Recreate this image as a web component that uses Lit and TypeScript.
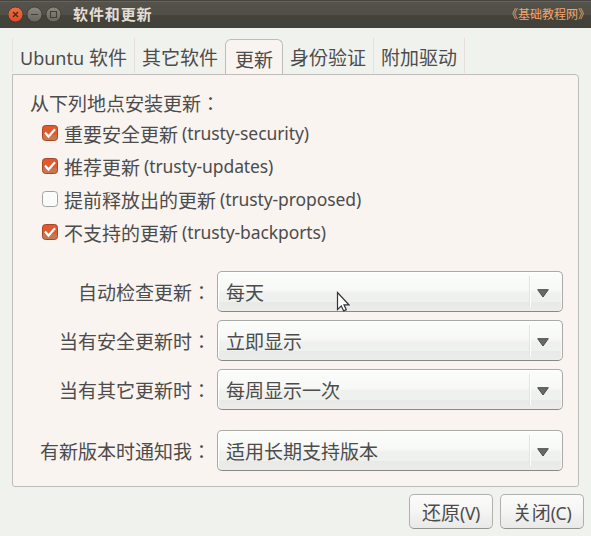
import { LitElement, html, css, svg } from "lit";
import { customElement, property } from "lit/decorators.js";

@customElement("window-bar")
class WindowBar extends LitElement {
  static styles = css`
    :host {
      display: flex;
      align-items: center;
      height: 28px;
      box-sizing: border-box;
      padding: 0 7px 0 8px;
      background: linear-gradient(#45443f 0 1px, #64635b 1px 2px, #54524b 2px, #504f48 15px, #43423b 15px, #42413a 28px);
    }
    .controls { display: block; flex: none; }
    .title {
      margin-left: 10px;
      font-size: 15px;
      font-weight: 700;
      letter-spacing: 0.9px;
      line-height: 28px;
      color: #e2ded6;
    }
    .site {
      margin-left: auto;
      font-size: 12px;
      line-height: 28px;
      color: #f3a66c;
      font-feature-settings: "halt";
    }
  `;
  render() {
    return html`
      <svg class="controls" width="55" height="28" viewBox="0 0 55 28">
        <defs>
          <linearGradient id="o" x1="0" y1="0" x2="0" y2="1">
            <stop offset="0" stop-color="#ee7047" /><stop offset="1" stop-color="#dc4f20" />
          </linearGradient>
          <linearGradient id="g" x1="0" y1="0" x2="0" y2="1">
            <stop offset="0" stop-color="#8b897f" /><stop offset="1" stop-color="#66655e" />
          </linearGradient>
        </defs>
        <circle cx="7.5" cy="14.5" r="7.5" fill="url(#o)" stroke="#38372f" stroke-width=".8" />
        <circle cx="26.5" cy="14.5" r="7.5" fill="url(#g)" stroke="#38372f" stroke-width=".8" />
        <circle cx="45.5" cy="14.5" r="7.5" fill="url(#g)" stroke="#38372f" stroke-width=".8" />
        <path d="M5 12l5 5M10 12l-5 5" stroke="#4a2a1c" stroke-width="1.4" />
        <path d="M23 14.5h7M42.5 11.5h6v6h-6z" fill="none" stroke="#403f39" stroke-width="1.1" />
      </svg>
      <span class="title">软件和更新</span>
      <span class="site">《基础教程网》</span>
    `;
  }
}

@customElement("check-row")
class CheckRow extends LitElement {
  @property() label = "";
  @property() channel = "";
  @property({ type: Boolean }) checked = false;
  static styles = css`
    :host { display: flex; align-items: center; height: 33px; color: #4c4c4c; font-size: 19px; line-height: 33px; white-space: pre; }
    .box { flex: none; display: block; margin: 0 6px 2px 0; }
    .latin { font-family: "Noto Sans", sans-serif; font-size: 17.5px; letter-spacing: -0.1px; margin-left: 4px; }
  `;
  render() {
    return html`
      <svg class="box" width="16" height="16" viewBox="0 0 16 16">
        <defs>
          <linearGradient id="f" x1="0" y1="0" x2="0" y2="1">
            <stop offset="0" stop-color="#e0592b" /><stop offset=".6" stop-color="#dc5c30" />
            <stop offset=".62" stop-color="#c9734c" /><stop offset="1" stop-color="#c77b54" />
          </linearGradient>
        </defs>
        <rect x=".5" y=".5" width="15" height="15" rx="3" fill=${this.checked ? "url(#f)" : "#fafcf9"}
          stroke=${this.checked ? "#a3492a" : "#a3a29f"} />
        ${this.checked ? svg`<path d="M3 7.6l3.5 3.9L13 4.2" fill="none" stroke="#fff" stroke-width="2.2" />` : null}
      </svg>
      <span>${this.label}</span><span class="latin">${this.channel}</span>
    `;
  }
}

@customElement("combo-box")
class ComboBox extends LitElement {
  @property() value = "";
  static styles = css`
    :host {
      display: flex;
      align-items: center;
      box-sizing: border-box;
      height: 41px;
      padding: 0 13px 0 8px;
      border: 1px solid #a9aaa8;
      border-bottom-color: #868a86;
      border-radius: 5px;
      background: linear-gradient(#fbfdfa, #f8f9f6 45%, #f0f1ee 55%, #eff1ee 76%, #e9e9e7 78%, #ececea);
      box-shadow: inset 1px 1px #fff, inset -1px 0 #fafafa;
      color: #4c4c4c;
      font-size: 19px;
      line-height: 39px;
    }
    .value { flex: 1; }
    .rule { width: 1px; height: 31px; background: #e2e3e1; border-right: 1px solid #fff; margin-right: 6px; }
    .arrow { display: block; margin-top: 3px; }
  `;
  render() {
    return html`
      <span class="value">${this.value}</span>
      <span class="rule"></span>
      <svg class="arrow" width="12" height="9" viewBox="0 0 12 9">
        <path d="M.7 .7h10.6L6 8z" fill="#68696b" stroke="#4b4b4b" />
      </svg>
    `;
  }
}

@customElement("app-root")
class AppRoot extends LitElement {
  static styles = css`
    :host {
      display: flex;
      flex-direction: column;
      position: relative;
      width: 591px;
      height: 536px;
      overflow: hidden;
      background: #f0f2ee;
      color: #4c4c4c;
      font-family: "Noto Sans CJK JP", "Noto Sans CJK SC", sans-serif;
      font-size: 19px;
    }
    .tabs { display: flex; align-items: flex-end; height: 46px; padding: 0 12px; z-index: 1; }
    .tab {
      box-sizing: border-box;
      height: 35px;
      margin-bottom: 1px;
      line-height: 37px;
      padding-left: 7px;
      border-right: 1px solid #e7dfdc;
      white-space: pre;
      flex: none;
    }
    .tab .latin { font-family: "Noto Sans", sans-serif; font-size: 18px; margin-right: 5px; }
    .first { width: 123px; border-left: 1px solid #e9e3e0; }
    .second { width: 90px; border-right: 0; }
    .active {
      width: 58px;
      height: 35px;
      margin-bottom: 0;
      padding-left: 9px;
      line-height: 37px;
      background: #faf4f1;
      border: 1px solid #bfbdbb;
      border-bottom: 0;
      border-radius: 6px 6px 0 0;
    }
    .fourth, .fifth { width: 91px; }
    .panel {
      box-sizing: border-box;
      margin: 0 12px;
      height: 413px;
      border: 1px solid #bfbdbb;
      border-radius: 0 4px 3px 3px;
      background: #faf4f1;
      padding: 14px 15px 0 17px;
    }
    .heading { height: 28px; line-height: 28px; }
    .checks { padding-left: 12px; height: 132px; }
    .form { display: grid; grid-template-columns: 187px 346px; row-gap: 8px; margin-top: 22px; }
    .label { text-align: right; padding-right: 6px; line-height: 41px; }
    .gap { margin-top: 12px; }
    .actions { display: flex; justify-content: flex-end; gap: 7px; padding: 7px 7px 0 0; }
    .button {
      box-sizing: border-box;
      width: 84px;
      height: 35px;
      border: 1px solid #b0b1af;
      border-bottom-color: #929592;
      border-radius: 5px;
      background: linear-gradient(#fbfcfa, #f5f6f3 50%, #efefed 70%, #e9e9e7);
      color: #4c4c4c;
      text-align: center;
      line-height: 34px;
      white-space: pre;
    }
    .button .latin { font-family: "Noto Sans", sans-serif; font-size: 17.5px; letter-spacing: -0.3px; }
    .pointer { position: absolute; left: 336px; top: 291px; }
  `;

  render() {
    const settings = [
      ["自动检查更新：", "每天"],
      ["当有安全更新时：", "立即显示"],
      ["当有其它更新时：", "每周显示一次"],
      ["有新版本时通知我：", "适用长期支持版本"],
    ];
    return html`
      <window-bar></window-bar>
      <div class="tabs">
        <div class="tab first"><span class="latin">Ubuntu</span>软件</div>
        <div class="tab second">其它软件</div>
        <div class="tab active">更新</div>
        <div class="tab fourth">身份验证</div>
        <div class="tab fifth">附加驱动</div>
      </div>
      <div class="panel">
        <div class="heading">从下列地点安装更新：</div>
        <div class="checks">
          <check-row checked label="重要安全更新" channel="(trusty-security)"></check-row>
          <check-row checked label="推荐更新" channel="(trusty-updates)"></check-row>
          <check-row label="提前释放出的更新" channel="(trusty-proposed)"></check-row>
          <check-row checked label="不支持的更新" channel="(trusty-backports)"></check-row>
        </div>
        <div class="form">
          ${settings.map(([label, value], i) => html`
            <div class="label ${i === 3 ? "gap" : ""}">${label}</div>
            <combo-box class=${i === 3 ? "gap" : ""} .value=${value}></combo-box>
          `)}
        </div>
      </div>
      <div class="actions">
        <div class="button">还原<span class="latin">(V)</span></div>
        <div class="button">关闭<span class="latin">(C)</span></div>
      </div>
      <svg class="pointer" width="14" height="21" viewBox="0 0 14 21">
        <path d="M1.5 1.5v17l3.8-3.6 2.4 5 2.6-1.2-2.3-4.9h4.9z" fill="#fff" stroke="#333" stroke-width="1.2" />
      </svg>
    `;
  }
}
